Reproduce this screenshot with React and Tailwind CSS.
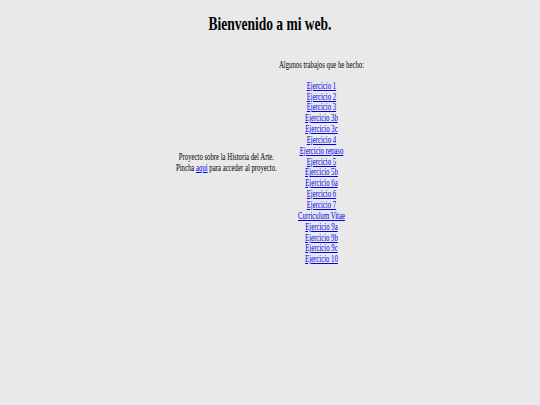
import React from "react";

const trabajos = [
  "Ejercicio 1",
  "Ejercicio 2",
  "Ejercicio 3",
  "Ejercicio 3b",
  "Ejercicio 3c",
  "Ejercicio 4",
  "Ejercicio repaso",
  "Ejercicio 5",
  "Ejercicio 5b",
  "Ejercicio 6a",
  "Ejercicio 6",
  "Ejercicio 7",
  "Curriculum Vitae",
  "Ejercicio 9a",
  "Ejercicio 9b",
  "Ejercicio 9c",
  "Ejercicio 10",
];

export default function App() {
  return (
    <div className="w-[540px] h-[405px] overflow-hidden bg-[#e9e9e9] text-black font-['Liberation_Serif','Times_New_Roman',serif]">
      {/* the page is drawn narrow, like the original screenshot */}
      <div className="w-[760px] origin-top-left scale-x-[0.7105]">
        <h1 className="mt-[13px] text-center text-[19px] leading-[22px] font-bold">
          Bienvenido a mi web.
        </h1>

        <div className="mt-[24.5px] flex items-center justify-center gap-[3px] text-[9.5px] leading-[10.85px]">
          <div className="flex flex-col items-center whitespace-nowrap pt-[1px]">
            <span>Proyecto sobre la Historia del Arte.</span>
            <span>
              Pincha{" "}
              <a href="#" className="text-[#0000ee] underline">
                aquí
              </a>{" "}
              para acceder al proyecto.
            </span>
          </div>

          <div className="flex flex-col items-center whitespace-nowrap">
            <span className="mb-[10.4px]">Algunos trabajos que he hecho:</span>
            {trabajos.map((t) => (
              <a key={t} href="#" className="text-[#0000ee] underline">
                {t}
              </a>
            ))}
          </div>
        </div>
      </div>
    </div>
  );
}
